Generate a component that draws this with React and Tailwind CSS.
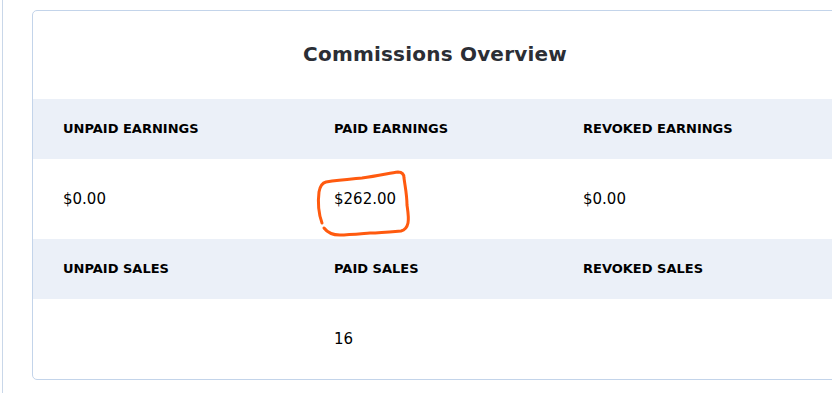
import React from 'react';

const rows = [
  {
    labels: ['UNPAID EARNINGS', 'PAID EARNINGS', 'REVOKED EARNINGS'],
    values: ['$0.00', '$262.00', '$0.00'],
  },
  {
    labels: ['UNPAID SALES', 'PAID SALES', 'REVOKED SALES'],
    values: ['', '16', ''],
  },
];

const Scribble = () => (
  <svg
    className="absolute pointer-events-none"
    style={{ left: 0, top: 0 }}
    width="832"
    height="393"
    viewBox="0 0 832 393"
  >
    <path
      d="M322 223 C318 212 318 200 319 192 C320 186 322 183 326 182 C340 180 352 179 362 178 C378 176 390 173 398 172 C402 172 404 174 404 178 C405 186 407 195 407 205 C408 212 409 218 408 223 C407 228 405 230 401 231 C390 232 380 233 370 233 C358 234 348 235 340 235 C332 235 327 232 324 228"
      fill="none"
      stroke="#ff5a0f"
      strokeWidth="3"
      strokeLinecap="round"
      strokeLinejoin="round"
    />
  </svg>
);

const App = () => {
  return (
    <div
      className="relative w-[832px] h-[393px] overflow-hidden bg-white"
      style={{ fontFamily: '"DejaVu Sans", "Liberation Sans", sans-serif' }}
    >
      <div className="absolute left-[2px] top-0 bottom-0 w-px bg-[#c9d7e9]" />
      <div className="pl-[32px] pt-[10px]">
        <div className="w-[806px] border border-[#c3d4ea] rounded-[5px] overflow-hidden">
          <div className="h-[88px] flex items-center justify-center">
            <h2 className="text-[20px] font-bold text-[#2b2e35] tracking-[0.2px] pb-[3px]">
              Commissions Overview
            </h2>
          </div>
          {rows.map((row, i) => (
            <div key={i}>
              <div className="grid grid-cols-[271px_249px_1fr] h-[60px] items-center bg-[#ebf0f8]">
                {row.labels.map((l) => (
                  <div key={l} className="pl-[30px] text-[13px] font-bold text-black">
                    {l}
                  </div>
                ))}
              </div>
              <div className="grid grid-cols-[271px_249px_1fr] h-[80px] items-center">
                {row.values.map((v, j) => (
                  <div key={j} className="pl-[30px] text-[15px] text-black">
                    {v}
                  </div>
                ))}
              </div>
            </div>
          ))}
        </div>
      </div>
      <Scribble />
    </div>
  );
};

export default App;
